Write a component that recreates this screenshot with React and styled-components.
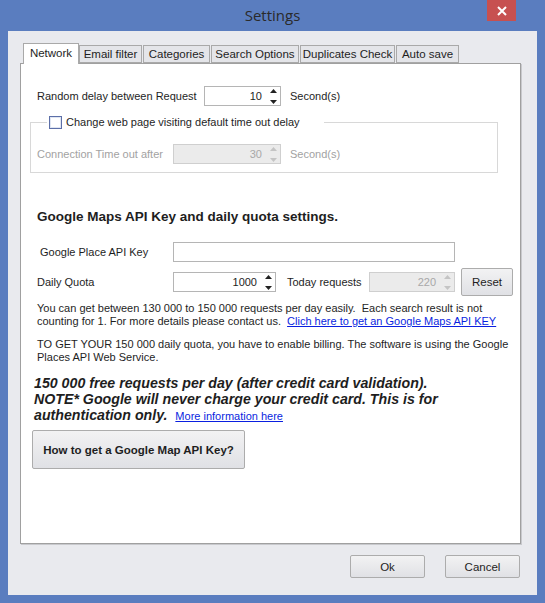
import { createGlobalStyle } from 'styled-components'
import styled from 'styled-components'

const GlobalStyle = createGlobalStyle`
  html, body {
    margin: 0;
    padding: 0;
    background: #5a7dbf;
  }
  body {
    font-family: "Liberation Sans", Arial, sans-serif;
    font-size: 11px;
    color: #1e1e1e;
  }
`

const tabs = [
  { name: 'Network', w: 56 },
  { name: 'Email filter', w: 63 },
  { name: 'Categories', w: 67 },
  { name: 'Search Options', w: 88 },
  { name: 'Duplicates Check', w: 95 },
  { name: 'Auto save', w: 63 },
]

const Spinner = ({ disabled }) => (
  <SpinArrows width="7" height="15" viewBox="0 0 7 15" $disabled={disabled}>
    <path d="M3.5 0 L7 4 L0 4 Z" />
    <path d="M0 11 L7 11 L3.5 15 Z" />
  </SpinArrows>
)

const SpinBox = ({ value, width, disabled }) => (
  <SpinField $w={width} $disabled={disabled}>
    <span>{value}</span>
    <Spinner disabled={disabled} />
  </SpinField>
)

const App = () => {
  return (
    <>
      <GlobalStyle />
      <Window>
        <TitleBar>
          <Title>Settings</Title>
          <CloseButton>
            <svg width="10" height="10" viewBox="0 0 10 10">
              <path d="M1 1 L9 9 M9 1 L1 9" stroke="#fff" strokeWidth="2" />
            </svg>
          </CloseButton>
        </TitleBar>
        <Client>
          <TabStrip>
            {tabs.map((t, i) => (
              <Tab key={t.name} $w={t.w} $active={i === 0}>{t.name}</Tab>
            ))}
          </TabStrip>
          <Panel>
            <Row $top={22}>
              <Label $w={167}>Random delay between Request</Label>
              <SpinBox value="10" width={77} />
              <Unit>Second(s)</Unit>
            </Row>

            <Group>
              <Legend>
                <CheckBox />
                Change web page visiting default time out delay
              </Legend>
              <Row>
                <Label $w={136} $muted>Connection Time out after</Label>
                <SpinBox value="30" width={108} disabled />
                <Unit $muted>Second(s)</Unit>
              </Row>
            </Group>

            <Heading>Google Maps API Key and daily quota settings.</Heading>

            <Row $top={17}>
              <Label $w={133} $indent={3}>Google Place API Key</Label>
              <TextField $w={282} />
            </Row>

            <QuotaRow>
              <Label $w={136}>Daily Quota</Label>
              <SpinBox value="1000" width={103} />
              <Label $w={82} $indent={11}>Today requests</Label>
              <SpinBox value="220" width={86} disabled />
              <Button $w={52} $h={28}>Reset</Button>
            </QuotaRow>

            <Para $top={6}>
              You can get between 130 000 to 150 000 requests per day easily.&nbsp; Each search result is not<br />
              counting for 1. For more details please contact us.&nbsp; <Link>Clich here to get an Google Maps API KEY</Link>
            </Para>

            <Para $top={10}>
              TO GET YOUR 150 000 daily quota, you have to enable billing. The software is using the Google<br />
              Places API Web Service.
            </Para>

            <Notice>
              150 000 free requests per day (after credit card validation).<br />
              NOTE* Google will never charge your credit card. This is for<br />
              authentication only.&nbsp; <SmallLink>More information here</SmallLink>
            </Notice>

            <BigButton>How to get a Google Map API Key?</BigButton>
          </Panel>
          <Footer>
            <Button $w={75} $h={23}>Ok</Button>
            <Button $w={75} $h={23}>Cancel</Button>
          </Footer>
        </Client>
      </Window>
    </>
  )
}

export default App

const Window = styled.div`
  width: 545px;
  height: 603px;
  background: #5a7dbf;
  display: flex;
  flex-direction: column;
  box-sizing: border-box;
  padding: 0 8px 8px 8px;
`

const TitleBar = styled.div`
  height: 31px;
  display: flex;
  align-items: center;
  justify-content: center;
  position: relative;
`

const Title = styled.div`
  font-family: "Open Sans", "Noto Sans", sans-serif;
  font-size: 15px;
  color: #2a2a2a;
  margin-top: -1px;
`

const CloseButton = styled.div`
  position: absolute;
  top: 0;
  right: 21px;
  width: 29px;
  height: 21px;
  background: #c75050;
  display: flex;
  align-items: center;
  justify-content: center;
`

const Client = styled.div`
  flex: 1;
  background: #e9eaee;
  padding: 12px 16px 0 12px;
  display: flex;
  flex-direction: column;
`

const TabStrip = styled.div`
  display: flex;
  align-items: flex-end;
  height: 20px;
  margin-left: 3px;
  position: relative;
  z-index: 1;
`

const Tab = styled.div`
  width: ${p => p.$w}px;
  height: ${p => (p.$active ? 21 : 18)}px;
  box-sizing: border-box;
  border: 1px solid #a9a9a9;
  border-bottom: ${p => (p.$active ? 'none' : '1px solid #a9a9a9')};
  background: ${p => (p.$active ? '#fff' : '#e4e5e9')};
  display: flex;
  align-items: center;
  justify-content: center;
  padding-bottom: ${p => (p.$active ? 2 : 0)}px;
  margin-right: ${p => (p.$active ? 0 : 1)}px;
  margin-bottom: ${p => (p.$active ? -1 : 0)}px;
  white-space: nowrap;
  font-size: 11.5px;
  color: #1e1e1e;
`

const Panel = styled.div`
  height: 481px;
  box-sizing: border-box;
  background: #fff;
  border: 1px solid #a0a0a0;
  box-shadow: 1px 1px 0 #c8c9cd;
  padding: 0 23px 0 16px;
  display: flex;
  flex-direction: column;
`

const Row = styled.div`
  display: flex;
  align-items: center;
  height: 20px;
  margin-top: ${p => p.$top || 0}px;
`

const QuotaRow = styled(Row)`
  height: 28px;
  margin-top: 6px;
`

const Label = styled.div`
  width: ${p => p.$w}px;
  padding-left: ${p => p.$indent || 0}px;
  box-sizing: content-box;
  color: ${p => (p.$muted ? '#a2a2a2' : '#1e1e1e')};
  white-space: nowrap;
  flex-shrink: 0;
`

const Unit = styled.div`
  margin-left: 9px;
  color: ${p => (p.$muted ? '#a2a2a2' : '#1e1e1e')};
`

const SpinField = styled.div`
  width: ${p => p.$w}px;
  height: 20px;
  box-sizing: border-box;
  border: 1px solid ${p => (p.$disabled ? '#cfcfcf' : '#b5b5b5')};
  background: ${p => (p.$disabled ? '#ebebeb' : '#fff')};
  color: ${p => (p.$disabled ? '#a8a8a8' : '#1e1e1e')};
  display: flex;
  align-items: center;
  justify-content: flex-end;
  padding-right: 3px;
  gap: 8px;
  flex-shrink: 0;
`

const SpinArrows = styled.svg`
  fill: ${p => (p.$disabled ? '#c4c4c4' : '#222')};
`

const TextField = styled.div`
  width: ${p => p.$w}px;
  height: 20px;
  box-sizing: border-box;
  border: 1px solid #b5b5b5;
  background: #fff;
`

const Group = styled.fieldset`
  margin: 9px 0 0 -7px;
  width: 468px;
  box-sizing: border-box;
  border: 1px solid #d8d8d8;
  padding: 15px 0 8px 6px;
  min-width: 0;
`

const Legend = styled.legend`
  margin-left: 10px;
  padding: 0 24px 0 2px;
  display: flex;
  align-items: center;
  gap: 4px;
  line-height: 14px;
`

const CheckBox = styled.span`
  width: 11px;
  height: 11px;
  border: 1px solid #5c6fa8;
  background: #fff;
  box-shadow: inset 0 0 0 1px #e0e6f2;
  display: inline-block;
`

const Heading = styled.div`
  margin-top: 36px;
  font-size: 13.5px;
  line-height: 16px;
  font-weight: bold;
  color: #1e1e1e;
`

const Para = styled.div`
  margin-top: ${p => p.$top}px;
  line-height: 13px;
  white-space: nowrap;
`

const Link = styled.span`
  color: #0a1fe0;
  text-decoration: underline;
  cursor: pointer;
`

const SmallLink = styled(Link)`
  font-style: normal;
  font-weight: normal;
  font-size: 11px;
`

const Notice = styled.div`
  margin-top: 11px;
  margin-left: -3px;
  font-size: 14.2px;
  line-height: 16px;
  font-weight: bold;
  font-style: italic;
  white-space: nowrap;
`

const Button = styled.div`
  width: ${p => p.$w}px;
  height: ${p => p.$h}px;
  box-sizing: border-box;
  border: 1px solid #acacac;
  border-radius: 2px;
  background: linear-gradient(#f2f2f3, #e0e1e5);
  display: flex;
  align-items: center;
  justify-content: center;
  margin-left: 6px;
  flex-shrink: 0;
  font-size: 11.5px;
  color: #1e1e1e;
`

const BigButton = styled(Button)`
  width: 213px;
  height: 39px;
  margin: 6px 0 0 -5px;
  font-weight: bold;
`

const Footer = styled.div`
  display: flex;
  justify-content: flex-end;
  gap: 14px;
  margin-top: 11px;
  padding-right: 1px;
`
